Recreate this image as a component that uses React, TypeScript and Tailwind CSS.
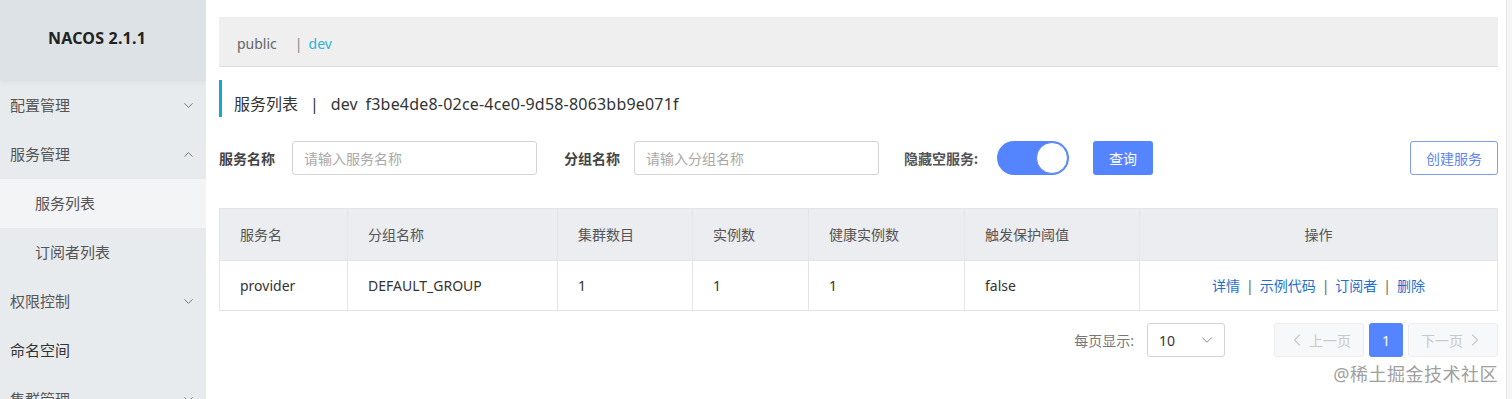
import { ChevronDown, ChevronUp, ChevronLeft, ChevronRight } from 'lucide-react';

const font = { fontFamily: '"Noto Sans", "Noto Sans CJK SC", sans-serif' };

interface MenuItem {
  label: string;
  sub?: boolean;
  open?: boolean;
  active?: boolean;
  caret?: boolean;
  dark?: boolean;
}

const menu: MenuItem[] = [
  { label: '配置管理', caret: true },
  { label: '服务管理', caret: true, open: true },
  { label: '服务列表', sub: true, active: true },
  { label: '订阅者列表', sub: true },
  { label: '权限控制', caret: true },
  { label: '命名空间', dark: true },
  { label: '集群管理', caret: true },
];

const cols = [
  { title: '服务名', w: 'w-[128px]' },
  { title: '分组名称', w: 'w-[210px]' },
  { title: '集群数目', w: 'w-[135px]' },
  { title: '实例数', w: 'w-[116px]' },
  { title: '健康实例数', w: 'w-[156px]' },
  { title: '触发保护阈值', w: 'w-[175px]' },
];

const row = ['provider', 'DEFAULT_GROUP', '1', '1', '1', 'false'];

function Sidebar() {
  return (
    <div className="w-[206px] shrink-0 bg-[#e8ebee] h-[399px] overflow-hidden">
      <div className="h-[81px] bg-[#dde2e6] flex items-center justify-center pb-[5px] shadow-[0_2px_4px_rgba(0,0,0,0.04)]">
        <span className="text-[16px] font-bold text-[#222] tracking-[0.2px] ml-[-12px]">NACOS 2.1.1</span>
      </div>
      {menu.map((m) => (
        <div
          key={m.label}
          className={`h-[49px] flex items-center justify-between pr-[10px] text-[15px] ${m.sub ? 'pl-[35px]' : 'pl-[10px]'} ${
            m.active ? 'bg-[#f2f4f6]' : ''
          } ${m.dark ? 'text-[#333]' : 'text-[#555]'}`}
        >
          <span>{m.label}</span>
          {m.caret &&
            (m.open ? (
              <ChevronUp className="w-[15px] h-[15px] text-[#666]" strokeWidth={1.4} />
            ) : (
              <ChevronDown className="w-[15px] h-[15px] text-[#666]" strokeWidth={1.4} />
            ))}
        </div>
      ))}
    </div>
  );
}

function Toolbar() {
  return (
    <div className="flex items-center mt-[24px] h-[34px]">
      <span className="text-[14px] font-bold text-[#444] w-[73px]">服务名称</span>
      <div className="w-[245px] h-[34px] border border-[#d3d3d3] rounded-[3px] flex items-center pl-[11px] text-[14px] text-[#a8a8a8]">
        请输入服务名称
      </div>
      <span className="text-[14px] font-bold text-[#444] ml-[27px] w-[70px]">分组名称</span>
      <div className="w-[245px] h-[34px] border border-[#d3d3d3] rounded-[3px] flex items-center pl-[11px] text-[14px] text-[#a8a8a8]">
        请输入分组名称
      </div>
      <span className="text-[14px] font-bold text-[#555] ml-[25px] w-[93px]">隐藏空服务:</span>
      <div className="w-[72px] h-[34px] rounded-full bg-[#5584ff] flex items-center justify-end pr-[1px]">
        <div className="w-[32px] h-[32px] rounded-full bg-white border border-[#5584ff]" />
      </div>
      <button className="ml-[24px] w-[60px] h-[34px] rounded-[3px] bg-[#5584ff] text-white text-[14px]">查询</button>
      <div className="flex-1" />
      <button className="w-[88px] h-[34px] rounded-[3px] border border-[#7d9cf5] bg-white text-[#5f86f0] text-[14px]">创建服务</button>
    </div>
  );
}

function Table() {
  return (
    <div className="mt-[33px] border border-[#e3e5e8] text-[14px] text-[#333]">
      <div className="flex h-[51px] bg-[#ebedf0] text-[#555]">
        {cols.map((c) => (
          <div key={c.title} className={`${c.w} shrink-0 flex items-center pl-[20px] border-r border-[#e3e5e8]`}>
            {c.title}
          </div>
        ))}
        <div className="flex-1 flex items-center justify-center">操作</div>
      </div>
      <div className="flex h-[50px] bg-white border-t border-[#e3e5e8]">
        {cols.map((c, i) => (
          <div key={c.title} className={`${c.w} shrink-0 flex items-center pl-[20px] border-r border-[#e3e5e8]`}>
            {row[i]}
          </div>
        ))}
        <div className="flex-1 flex items-center justify-center text-[#1f6fd1] gap-[6px]">
          <span>详情</span>
          <span className="text-[#666]">|</span>
          <span>示例代码</span>
          <span className="text-[#666]">|</span>
          <span>订阅者</span>
          <span className="text-[#666]">|</span>
          <span>删除</span>
        </div>
      </div>
    </div>
  );
}

function Pagination() {
  return (
    <div className="flex items-center justify-end mt-[12px] h-[34px] text-[14px]">
      <span className="text-[#777] mr-[13px]">每页显示:</span>
      <div className="w-[78px] h-[34px] border border-[#d3d3d3] rounded-[3px] flex items-center justify-between pl-[11px] pr-[8px] text-[#333]">
        <span>10</span>
        <ChevronDown className="w-[18px] h-[18px] text-[#888]" strokeWidth={1.3} />
      </div>
      <div className="ml-[49px] w-[90px] h-[34px] rounded-[3px] border border-[#ececec] bg-[#f7f8fa] flex items-center justify-center text-[#c8c8c8]">
        <ChevronLeft className="w-[20px] h-[20px] mr-[2px]" strokeWidth={1.3} />
        上一页
      </div>
      <div className="ml-[5px] w-[34px] h-[34px] rounded-[3px] bg-[#5584ff] text-white flex items-center justify-center">1</div>
      <div className="ml-[5px] w-[90px] h-[34px] rounded-[3px] border border-[#ececec] bg-[#f7f8fa] flex items-center justify-center text-[#c8c8c8]">
        下一页
        <ChevronRight className="w-[20px] h-[20px] ml-[2px]" strokeWidth={1.3} />
      </div>
    </div>
  );
}

export default function App() {
  return (
    <div className="relative flex w-[1512px] h-[399px] overflow-hidden bg-white" style={font}>
      <Sidebar />
      <div className="flex-1 pl-[13px] pr-[8px] pt-[17px]">
        {/* namespace bar */}
        <div className="h-[50px] bg-[#efefef] border-b border-[#dcdcdc] flex items-center pl-[18px] pt-[3px] text-[14px]">
          <span className="text-[#666]">public</span>
          <span className="text-[#888] ml-[18px] mr-[6px]">|</span>
          <span className="text-[#27b4d8]">dev</span>
        </div>

        {/* title */}
        <div className="mt-[13px] flex items-center h-[37px] border-l-[3px] border-[#1aa3d4] pl-[12px] text-[16px] text-[#333] pt-[10px]">
          <span>服务列表</span>
          <span className="mx-[12px]">|</span>
          <span>dev</span>
          <span className="ml-[8px] tracking-[0.2px]">f3be4de8-02ce-4ce0-9d58-8063bb9e071f</span>
        </div>

        <Toolbar />
        <Table />
        <Pagination />
      </div>
      <div className="w-[6px] shrink-0 bg-[#f5f5f5] border-l border-[#e6e6e6]" />

      <div className="absolute right-[14px] bottom-[11px] text-[18px] text-[#a0a0a0] tracking-[0.5px]">@稀土掘金技术社区</div>
    </div>
  );
}
